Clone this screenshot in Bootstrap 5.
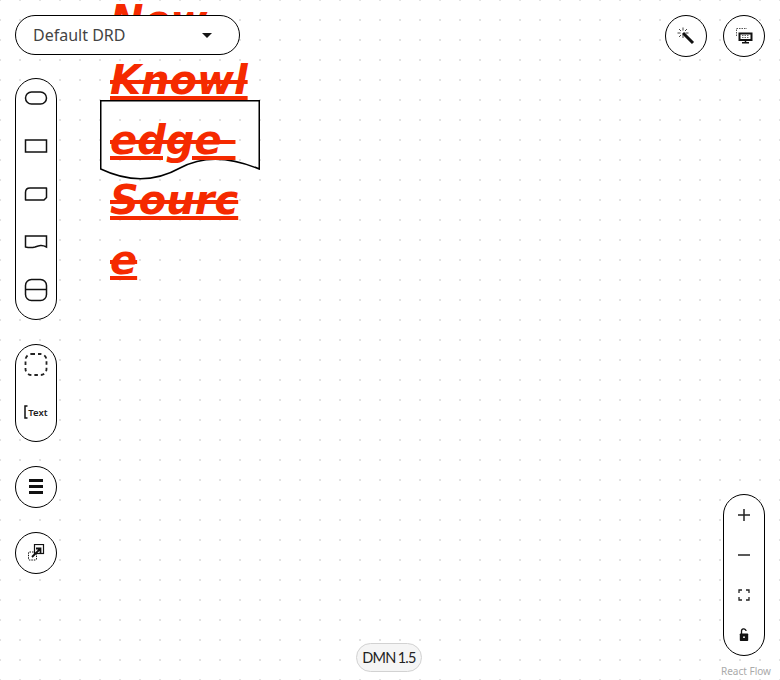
<!doctype html>
<html lang="en">
<head>
<meta charset="utf-8">
<title>DMN Editor</title>
<link href="https://cdn.jsdelivr.net/npm/bootstrap@5.3.0/dist/css/bootstrap.min.css" rel="stylesheet">
<style>
html,body{height:100%;margin:0;overflow:hidden}
body{background:#fff;font-family:"Noto Sans",sans-serif;color:#151515}
.flow-canvas{position:relative;width:780px;height:680px;overflow:hidden;
  background-image:radial-gradient(circle,#e2e2e2 0.7px,transparent 1px);background-size:20px 20px;background-position:-10px -10px}
.kn-label{position:absolute;left:110px;top:-10px;width:140px;font:italic 700 40px/60px "DejaVu Sans",sans-serif;color:#f52a00;text-decoration:underline line-through;white-space:break-spaces;overflow-wrap:anywhere;z-index:2}
.kn-shape{position:absolute;left:100px;top:100px}
.side-col{position:absolute;left:15px;top:78px;width:42px;display:flex;flex-direction:column;gap:24px;z-index:3}
.pill{background:#fff;border:1px solid #000;border-radius:21px;display:flex;flex-direction:column;align-items:center}
.pill-slot{width:40px;height:38px;margin-bottom:10px;display:flex;align-items:center;justify-content:center}
.round-btn{width:42px;height:42px;background:#fff;border:1px solid #000;border-radius:50%;display:flex;align-items:center;justify-content:center;flex:none;padding:0}
.drd-select{position:absolute;left:15px;top:15px;width:225px;height:40px;background:#fff;border:1px solid #000;border-radius:20px;display:flex;align-items:center;justify-content:space-between;padding:0 27px 0 17px;font-size:16px;color:#444;z-index:3}
.caret-mark{width:0;height:0;border-left:5px solid transparent;border-right:5px solid transparent;border-top:5px solid #151515}
.top-tools{position:absolute;right:15px;top:15px;display:flex;gap:16px;z-index:3}
.zoom-pill{position:absolute;left:723px;top:494px;width:42px;height:162px;z-index:3}
.zoom-pill .pill-slot{height:40px;margin-bottom:0}
.dmn-tag{position:absolute;left:356px;top:643px;width:66px;height:29px;background:#f5f5f5;border:1px solid #d2d2d2;border-radius:15px;display:flex;align-items:center;justify-content:center;font:14.5px "Lato",sans-serif;letter-spacing:-.7px;word-spacing:-1px;color:#222;z-index:3}
.rf-credit{position:absolute;left:721px;top:664px;font-size:10px;line-height:14px;color:#aaa;z-index:3}
.text-tool{font:600 9.5px "Noto Sans",sans-serif;color:#222}
</style>
</head>
<body>
<div class="flow-canvas">
  <svg class="kn-shape" width="160" height="81" viewBox="0 0 160 81"><path d="M.75.75H159.25V69C128 56 102 56 80 68C55 82 28 82 .75 69Z" fill="none" stroke="#000" stroke-width="1.5"/></svg>
  <div class="kn-label">New Knowledge Source</div>

  <div class="drd-select"><span>Default DRD</span><span class="caret-mark"></span></div>

  <div class="top-tools">
    <button class="round-btn" aria-label="Wand"><svg width="18" height="18" viewBox="0 0 18 18"><path d="M6 6l10 10" stroke="#111" stroke-width="3"/><path d="M6 0.500v3M6 8v3M.5 6h3M8.500 6h3M2 2l2 2M10 2L8 4M2 10l2-2" stroke="#444" stroke-width="1" fill="none"/></svg></button>
    <button class="round-btn" aria-label="Display"><svg width="18" height="18" viewBox="0 0 18 18"><path d="M1.500 9V1.500H12" stroke="#555" stroke-width="1" stroke-dasharray="1.500 1" fill="none"/><rect x="3.500" y="5.500" width="14" height="8.500" fill="#111"/><rect x="5.500" y="7.500" width="10" height="4.500" fill="#fff"/><path d="M7 8.500h7M7 10.500h7" stroke="#666" stroke-dasharray="1.500 1"/><path d="M10.500 14v1.500M7 15.700h7" stroke="#111" stroke-width="1.500"/></svg></button>
  </div>

  <div class="side-col">
    <div class="pill">
      <div class="pill-slot"><svg width="24" height="16" viewBox="0 0 24 16"><rect x="1.500" y="2" width="21" height="12" rx="6" fill="none" stroke="#111" stroke-width="1.500"/></svg></div>
      <div class="pill-slot"><svg width="24" height="16" viewBox="0 0 24 16"><rect x="1.500" y="2" width="21" height="12" fill="none" stroke="#111" stroke-width="1.500"/></svg></div>
      <div class="pill-slot"><svg width="24" height="16" viewBox="0 0 24 16"><path d="M6 2H22.500V11.500L20 14H1.500V6.500Q1.500 2 6 2Z" fill="none" stroke="#111" stroke-width="1.500" stroke-linejoin="round"/></svg></div>
      <div class="pill-slot"><svg width="24" height="16" viewBox="0 0 24 16"><path d="M1.500 2H22.500V13C18 10.500 15 11.500 11 13C7 14 4 13.500 1.500 13Z" fill="none" stroke="#111" stroke-width="1.500"/></svg></div>
      <div class="pill-slot"><svg width="24" height="24" viewBox="0 0 24 24"><rect x="1.500" y="1.500" width="21" height="21" rx="6" fill="none" stroke="#111" stroke-width="1.500"/><path d="M1.500 11.500H22.500" stroke="#111" stroke-width="1.500"/></svg></div>
    </div>
    <div class="pill">
      <div class="pill-slot"><svg width="24" height="24" viewBox="0 0 24 24"><rect x="1.500" y="2" width="21" height="21" rx="6" fill="none" stroke="#222" stroke-width="1.800" stroke-dasharray="3.500 3"/></svg></div>
      <div class="pill-slot"><span class="d-flex align-items-center text-tool"><svg width="4" height="14" viewBox="0 0 4 14"><path d="M3.500 1H1V13H3.500" fill="none" stroke="#111" stroke-width="1.500"/></svg>Text</span></div>
    </div>
    <button class="round-btn" aria-label="Properties"><svg width="16" height="16" viewBox="0 0 16 16"><path d="M1 1.500h14M1 7.500h14M1 13.500h14" stroke="#111" stroke-width="2.800"/></svg></button>
    <button class="round-btn" aria-label="Overlay"><svg width="18" height="18" viewBox="0 0 18 18"><rect x="1.500" y="8" width="8" height="8" rx="1" fill="none" stroke="#111" stroke-dasharray="1.500 1"/><rect x="7.500" y=".5" width="9" height="9" fill="#fff" stroke="#111" stroke-width="1.200"/><path d="M5 13L13 5M9 4.500h4.500V9" stroke="#111" stroke-width="1.800" fill="none"/></svg></button>
  </div>

  <div class="pill zoom-pill">
    <div class="pill-slot"><svg width="14" height="14" viewBox="0 0 14 14"><path d="M7 1v12M1 7h12" stroke="#222" stroke-width="1.500"/></svg></div>
    <div class="pill-slot"><svg width="14" height="14" viewBox="0 0 14 14"><path d="M1 7h12" stroke="#222" stroke-width="1.500"/></svg></div>
    <div class="pill-slot"><svg width="12" height="12" viewBox="0 0 12 12"><path d="M1 4V1H4M8 1h3V4M11 8v3H8M4 11H1V8" fill="none" stroke="#222" stroke-width="1.300"/></svg></div>
    <div class="pill-slot"><svg width="10" height="14" viewBox="0 0 10 14"><path d="M2.500 6V3.500a2.300 2.300 0 0 1 4.600-.5" fill="none" stroke="#111" stroke-width="1.300"/><rect x=".8" y="5.500" width="8.400" height="7.500" rx=".8" fill="#111"/><circle cx="5" cy="9.200" r=".9" fill="#fff"/></svg></div>
  </div>

  <div class="dmn-tag">DMN 1.5</div>
  <div class="rf-credit">React Flow</div>
</div>
<script src="https://cdn.jsdelivr.net/npm/bootstrap@5.3.0/dist/js/bootstrap.bundle.min.js"></script>
</body>
</html>
